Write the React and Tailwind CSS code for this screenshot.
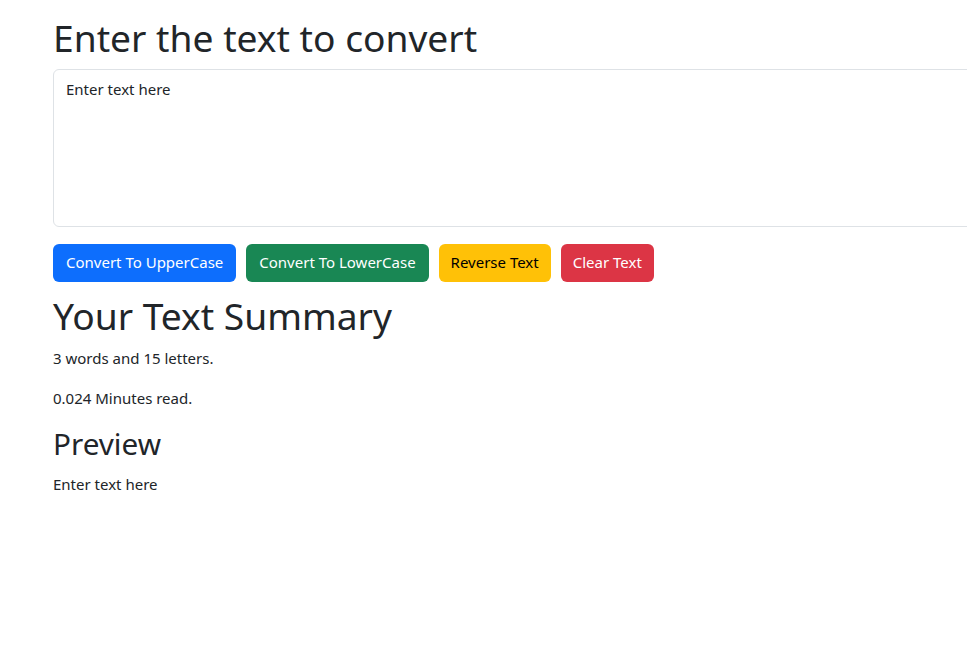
import React, { useState } from "react";

export default function App() {
  const [text, setText] = useState("");
  const words = 3;
  const letters = 15;
  return (
    <div
      className="w-full min-h-screen overflow-hidden bg-white text-[#212529]"
      style={{ fontFamily: '"Noto Sans", "Open Sans", sans-serif' }}
    >
      <div className="pl-[53px] pt-[16px] w-[1100px]">
        <h1 className="text-[37.2px] leading-[1.2] font-normal mb-2">
          Enter the text to convert
        </h1>
        <textarea
          className="block w-full h-[158px] border border-[#dee2e6] rounded-[6px] px-3 py-[7px] text-[15px] leading-6 resize-none outline-none placeholder:text-[#212529]"
          placeholder="Enter text here"
          value={text}
          onChange={(e) => setText(e.target.value)}
        />
        <div className="flex gap-[10px] mt-[17px]">
          <button className="h-[38px] px-[13px] rounded-[6px] bg-[#0d6efd] text-white text-[15px]">
            Convert To UpperCase
          </button>
          <button className="h-[38px] px-[13px] rounded-[6px] bg-[#198754] text-white text-[15px]">
            Convert To LowerCase
          </button>
          <button className="h-[38px] px-[12px] rounded-[6px] bg-[#ffc107] text-black text-[15px]">
            Reverse Text
          </button>
          <button className="h-[38px] px-[12px] rounded-[6px] bg-[#dc3545] text-white text-[15px]">
            Clear Text
          </button>
        </div>
        <h1 className="text-[37.2px] leading-[1.2] font-normal mt-[12px] mb-2">
          Your Text Summary
        </h1>
        <p className="text-[15px] leading-6 mb-4">
          {words} words and {letters} letters.
        </p>
        <p className="text-[15px] leading-6 mb-4">0.024 Minutes read.</p>
        <h2 className="text-[29.7px] leading-[1.2] font-normal mt-[5px] mb-[10px]">Preview</h2>
        <p className="text-[15px] leading-6">{text || "Enter text here"}</p>
      </div>
    </div>
  );
}
